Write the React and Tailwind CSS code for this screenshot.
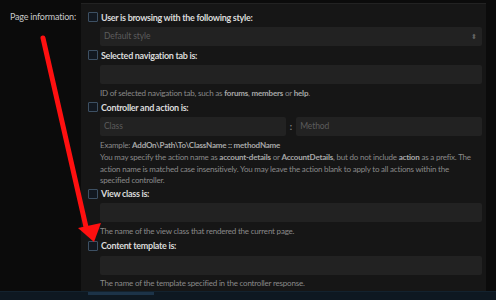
import React from 'react';

function Check() {
  return <span className="w-[10px] h-[10px] border border-[#3d5063] rounded-[1px] shrink-0 bg-[#121820]" />;
}

function Label({ children, className = '' }) {
  return (
    <div className={`flex items-center gap-[3px] h-[14px] -ml-[12px] ${className}`}>
      <Check />
      <span className="font-bold text-[9px] tracking-[-0.3px] text-[#dadada] leading-none whitespace-nowrap">{children}</span>
    </div>
  );
}

function Box({ placeholder, className = '', children }) {
  return (
    <div className={`h-[19px] bg-[#222222] rounded-[2px] flex items-center px-[4px] text-[8.5px] tracking-[-0.1px] text-[#5c5c5c] ${className}`}>
      {placeholder}
      {children}
    </div>
  );
}

function Hint({ children, className = '' }) {
  return <p className={`text-[8px] tracking-[-0.2px] text-[#8a8a8a] ${className}`}>{children}</p>;
}

const B = ({ children }) => <b className="text-[#a8a8a8]">{children}</b>;

export default function App() {
  return (
    <div className="relative w-[496px] h-[300px] bg-[#0b0b0b] overflow-hidden" style={{ fontFamily: 'Lato, "Open Sans", sans-serif' }}>
      <div className="flex h-[291px]">
        <div className="w-[81px] shrink-0 text-right pr-[5px] pt-[10px] text-[9px] tracking-[-0.2px] text-[#c8c8c8] whitespace-nowrap">Page information:</div>
        <div className="w-[405px] bg-[#161616] border-t border-[#222] mt-[3px] pl-[19px] pr-[4px] pt-[6px]">
          <Label>User is browsing with the following style:</Label>
          <Box placeholder="Default style" className="mt-[3px] justify-between">
            <span className="text-[7px] text-[#666] leading-none mr-[1px]">⬍</span>
          </Box>

          <Label className="mt-[2px]">Selected navigation tab is:</Label>
          <Box className="mt-[3px]" />
          <Hint className="mt-[3px] leading-[12px]">ID of selected navigation tab, such as <B>forums</B>, <B>members</B> or <B>help</B>.</Hint>

          <Label className="mt-[1px]">Controller and action is:</Label>
          <div className="mt-[3px] flex items-center gap-[4px]">
            <Box placeholder="Class" className="flex-1" />
            <span className="text-[9px] text-[#888] font-bold">:</span>
            <Box placeholder="Method" className="flex-1" />
          </div>
          <Hint className="mt-[3px] leading-[12px]">Example: <B>AddOn\Path\To\ClassName :: methodName</B></Hint>
          <Hint className="mt-[1px] leading-[11.5px] pr-[10px]">You may specify the action name as <B>account-details</B> or <B>AccountDetails</B>, but do not include <B>action</B> as a prefix. The action name is matched case insensitively. You may leave the action blank to apply to all actions within the specified controller.</Hint>

          <Label>View class is:</Label>
          <Box className="mt-[2px]" />
          <Hint className="mt-[3px] leading-[12px]">The name of the view class that rendered the current page.</Hint>

          <Label className="mt-[2px]">Content template is:</Label>
          <Box className="mt-[3px]" />
          <Hint className="mt-[2px] leading-[12px]">The name of the template specified in the controller response.</Hint>
        </div>
      </div>
      <div className="h-[9px] bg-[#0e1821] border-t border-[#13222e] flex">
        <div className="ml-[88px] w-[66px] h-[3px] bg-[#1c3348]" />
      </div>

      <svg className="absolute left-0 top-0 pointer-events-none" width="496" height="300" viewBox="0 0 496 300">
        <line x1="43" y1="38" x2="86" y2="227" stroke="#ff1010" strokeWidth="5" strokeLinecap="round" />
        <polygon points="78,228 101,223 94,242" fill="#ff1010" />
      </svg>
    </div>
  );
}
